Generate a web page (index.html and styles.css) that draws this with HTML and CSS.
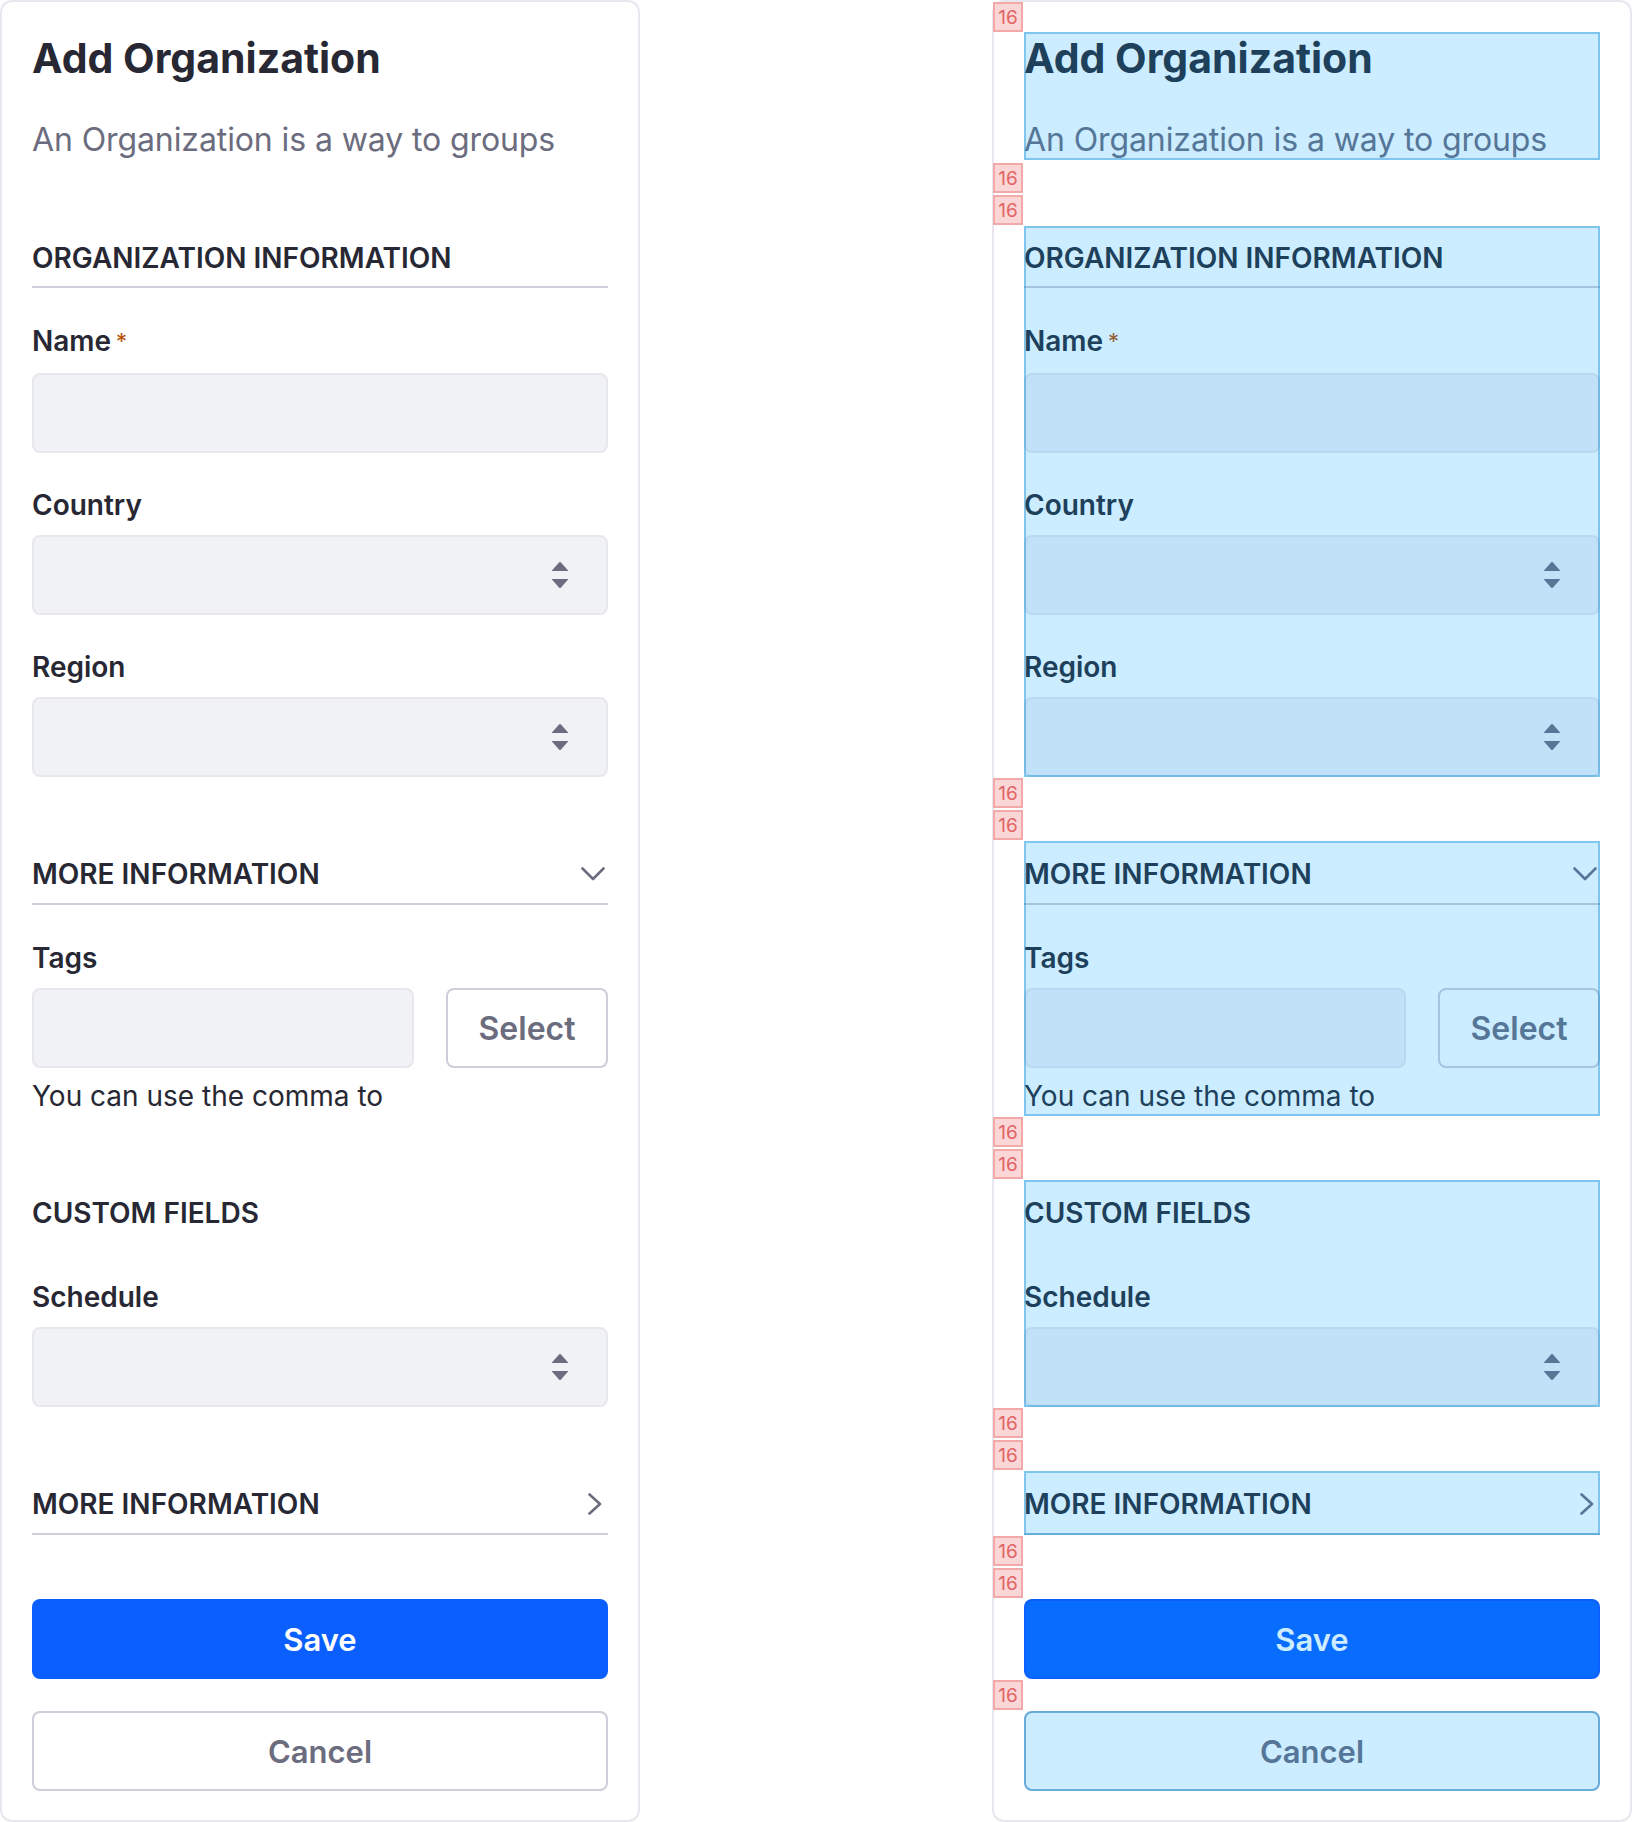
FILE: index.html
```html
<!DOCTYPE html>
<html lang="en">
<head>
<meta charset="utf-8">
<title>Add Organization</title>
<link rel="stylesheet" href="styles.css">
</head>
<body>
<main class="page">

  <!-- Plain form -->
  <section class="panel">
    <div class="stack plain">
      <header class="block intro">
        <h1 class="title">Add Organization</h1>
        <p class="subtitle">An Organization is a way to groups</p>
      </header>

      <div class="block sheet-section first">
        <h2 class="section-title">Organization Information</h2>
        <div class="form-group">
          <div class="field-label">Name<span class="req">*</span></div>
          <div class="form-control"></div>
        </div>
        <div class="form-group">
          <div class="field-label">Country</div>
          <div class="form-control select"><svg class="updown" width="18" height="28" viewBox="0 0 18 28"><path d="M0.5 10 L8 1.5 Q9 0.5 10 1.5 L17.5 10 Z"/><path d="M0.5 18 L17.5 18 L10 26.5 Q9 27.5 8 26.5 Z"/></svg></div>
        </div>
        <div class="form-group">
          <div class="field-label">Region</div>
          <div class="form-control select"><svg class="updown" width="18" height="28" viewBox="0 0 18 28"><path d="M0.5 10 L8 1.5 Q9 0.5 10 1.5 L17.5 10 Z"/><path d="M0.5 18 L17.5 18 L10 26.5 Q9 27.5 8 26.5 Z"/></svg></div>
        </div>
      </div>

      <div class="block sheet-section">
        <h2 class="section-title">More Information<svg class="chev-down" width="24" height="14" viewBox="0 0 24 14"><polyline points="1.5,1.5 12,12 22.5,1.5"/></svg></h2>
        <div class="form-group">
          <div class="field-label">Tags</div>
          <div class="tags-row">
            <div class="form-control"></div>
            <div class="btn btn-secondary btn-select">Select</div>
          </div>
          <p class="help">You can use the comma to</p>
        </div>
      </div>

      <div class="block sheet-section">
        <h2 class="section-title no-line">Custom Fields</h2>
        <div class="form-group">
          <div class="field-label">Schedule</div>
          <div class="form-control select"><svg class="updown" width="18" height="28" viewBox="0 0 18 28"><path d="M0.5 10 L8 1.5 Q9 0.5 10 1.5 L17.5 10 Z"/><path d="M0.5 18 L17.5 18 L10 26.5 Q9 27.5 8 26.5 Z"/></svg></div>
        </div>
      </div>

      <div class="block sheet-section">
        <h2 class="section-title collapsed">More Information<svg class="chev-right" width="14" height="22" viewBox="0 0 14 22"><polyline points="1.5,1.5 12,11 1.5,20.5"/></svg></h2>
      </div>

      <div class="block btn btn-primary">Save</div>
      <div class="block tight btn btn-secondary">Cancel</div>
    </div>
  </section>

  <!-- Same form with the spacing inspector on -->
  <section class="panel inspect">
    <div class="stack">
      <div class="gap top"><span class="mark">16</span></div>
      <header class="intro hl">
        <h1 class="title">Add Organization</h1>
        <p class="subtitle">An Organization is a way to groups</p>
      </header>
      <div class="gap wide"><span class="mark">16</span></div>
      <div class="gap"><span class="mark">16</span></div>

      <div class="sheet-section first hl">
        <h2 class="section-title">Organization Information</h2>
        <div class="form-group">
          <div class="field-label">Name<span class="req">*</span></div>
          <div class="form-control"></div>
        </div>
        <div class="form-group">
          <div class="field-label">Country</div>
          <div class="form-control select"><svg class="updown" width="18" height="28" viewBox="0 0 18 28"><path d="M0.5 10 L8 1.5 Q9 0.5 10 1.5 L17.5 10 Z"/><path d="M0.5 18 L17.5 18 L10 26.5 Q9 27.5 8 26.5 Z"/></svg></div>
        </div>
        <div class="form-group">
          <div class="field-label">Region</div>
          <div class="form-control select"><svg class="updown" width="18" height="28" viewBox="0 0 18 28"><path d="M0.5 10 L8 1.5 Q9 0.5 10 1.5 L17.5 10 Z"/><path d="M0.5 18 L17.5 18 L10 26.5 Q9 27.5 8 26.5 Z"/></svg></div>
        </div>
      </div>
      <div class="gap"><span class="mark">16</span></div>
      <div class="gap"><span class="mark">16</span></div>

      <div class="sheet-section hl">
        <h2 class="section-title">More Information<svg class="chev-down" width="24" height="14" viewBox="0 0 24 14"><polyline points="1.5,1.5 12,12 22.5,1.5"/></svg></h2>
        <div class="form-group">
          <div class="field-label">Tags</div>
          <div class="tags-row">
            <div class="form-control"></div>
            <div class="btn btn-secondary btn-select">Select</div>
          </div>
          <p class="help">You can use the comma to</p>
        </div>
      </div>
      <div class="gap"><span class="mark">16</span></div>
      <div class="gap"><span class="mark">16</span></div>

      <div class="sheet-section hl">
        <h2 class="section-title no-line">Custom Fields</h2>
        <div class="form-group">
          <div class="field-label">Schedule</div>
          <div class="form-control select"><svg class="updown" width="18" height="28" viewBox="0 0 18 28"><path d="M0.5 10 L8 1.5 Q9 0.5 10 1.5 L17.5 10 Z"/><path d="M0.5 18 L17.5 18 L10 26.5 Q9 27.5 8 26.5 Z"/></svg></div>
        </div>
      </div>
      <div class="gap"><span class="mark">16</span></div>
      <div class="gap"><span class="mark">16</span></div>

      <div class="sheet-section hl">
        <h2 class="section-title collapsed">More Information<svg class="chev-right" width="14" height="22" viewBox="0 0 14 22"><polyline points="1.5,1.5 12,11 1.5,20.5"/></svg></h2>
      </div>
      <div class="gap"><span class="mark">16</span></div>
      <div class="gap"><span class="mark">16</span></div>

      <div class="btn btn-primary hl">Save</div>
      <div class="gap"><span class="mark">16</span></div>
      <div class="btn btn-secondary hl">Cancel</div>
    </div>
  </section>

</main>
</body>
</html>
```

FILE: styles.css
```css
* { box-sizing: border-box; }

html, body {
  margin: 0;
  padding: 0;
  background: #ffffff;
}

body {
  font-family: Inter, "Noto Sans", "Liberation Sans", sans-serif;
  color: #272833;
}

.page {
  display: flex;
  gap: 352px;
  width: 1632px;
}

.panel {
  width: 640px;
  height: 1822px;
  border: 2px solid #e7e7ed;
  border-radius: 12px;
  padding: 30px;
  background: #fff;
}

.panel.inspect {
  padding-top: 0;
}

.stack {
  display: flex;
  flex-direction: column;
}

.plain > .block + .block { margin-top: 64px; }
.plain > .block.first { margin-top: 66px; }
.plain > .block.tight { margin-top: 32px; }

/* Header */
.intro {
  display: flex;
  flex-direction: column;
  gap: 36px;
}

.title {
  margin: 0;
  font-size: 41px;
  line-height: 52px;
  font-weight: 700;
  color: #272833;
}

.subtitle {
  margin: 0;
  font-size: 32px;
  line-height: 40px;
  font-weight: 400;
  color: #6b6c7e;
  letter-spacing: -0.1px;
}

/* Sections */
.section-title {
  margin: 0 0 33px;
  padding: 15px 0 11px;
  display: flex;
  align-items: center;
  justify-content: space-between;
  font-size: 28px;
  line-height: 36px;
  font-weight: 600;
  text-transform: uppercase;
  color: #272833;
  border-bottom: 2px solid #cdced9;
}

.first .section-title { padding: 14px 0 10px; }

.section-title.no-line { border-bottom-color: transparent; }
.section-title.collapsed { margin-bottom: 0; }

.chev-down { margin-right: 3px; }
.chev-right { margin-right: 6px; }

.chev-down polyline,
.chev-right polyline {
  fill: none;
  stroke: #6b6c7e;
  stroke-width: 2.6;
  stroke-linecap: round;
  stroke-linejoin: round;
}

.form-group + .form-group { margin-top: 32px; }

.field-label {
  font-size: 28px;
  line-height: 40px;
  font-weight: 600;
  color: #272833;
  margin-bottom: 10px;
}

.req {
  color: #b95000;
  font-size: 22px;
  font-weight: 400;
  margin-left: 5px;
  position: relative;
  top: -2px;
}

.form-control {
  height: 80px;
  background: #f1f2f5;
  border: 2px solid #e7e7ed;
  border-radius: 8px;
}

.form-control.select {
  display: flex;
  align-items: center;
  justify-content: flex-end;
  padding-right: 37px;
}

.updown path { fill: #6b6c7e; }

.tags-row {
  display: grid;
  grid-template-columns: 1fr 162px;
  gap: 32px;
}

.help {
  margin: 8px 0 0;
  font-size: 28px;
  line-height: 40px;
  color: #272833;
}

/* Buttons */
.btn {
  height: 80px;
  border-radius: 8px;
  display: flex;
  align-items: center;
  justify-content: center;
  font-size: 31px;
  font-weight: 600;
}

.btn-select { font-size: 32px; }

.btn-primary {
  background: #0b5fff;
  color: #fff;
}

.btn-secondary {
  background: #fff;
  border: 2px solid #cdced9;
  color: #6b6c7e;
}

/* Spacing inspector */
.hl { position: relative; }

.hl::after {
  content: "";
  position: absolute;
  inset: 0;
  background: rgba(0, 160, 255, 0.2);
  background-clip: padding-box;
  border: 2px solid rgba(0, 140, 220, 0.5);
  pointer-events: none;
}

.btn-secondary.hl::after { inset: -2px; border-radius: 8px; }
.btn-primary.hl::after { border-radius: 8px; border-color: transparent; }

.gap {
  height: 32px;
  display: flex;
  align-items: center;
}

.gap.top { height: 30px; }
.gap.wide { height: 34px; align-items: flex-end; padding-bottom: 1px; }

.mark {
  width: 30px;
  height: 30px;
  margin-left: -31px;
  display: flex;
  align-items: center;
  justify-content: center;
  background: #fbd6d6;
  border: 2px solid #f4a9a9;
  color: #e06565;
  font-size: 19px;
  font-weight: 400;
  line-height: 1;
}
```
